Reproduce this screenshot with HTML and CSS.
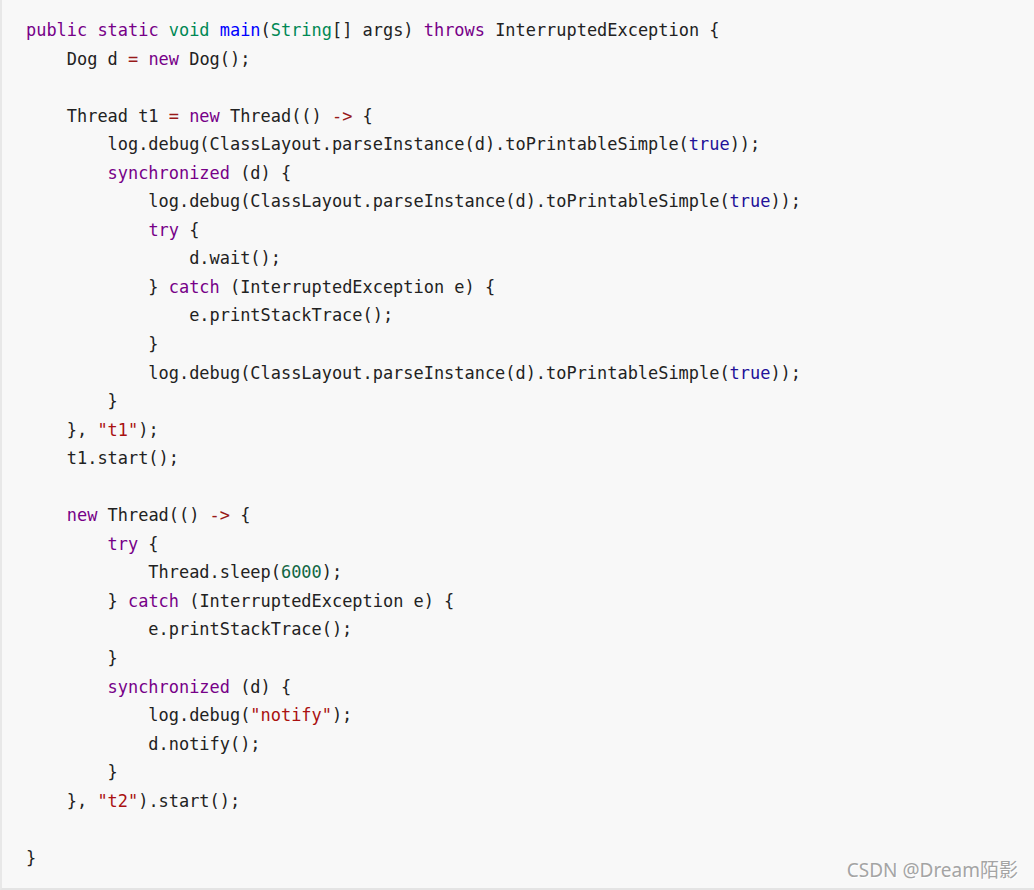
FILE: index.html
```html
<!DOCTYPE html>
<html>
<head>
<meta charset="utf-8">
<link rel="stylesheet" href="styles.css">
</head>
<body>
<div class="code-block">
<pre class="code"><span class="kw">public</span> <span class="kw">static</span> <span class="ty">void</span> <span class="def">main</span>(<span class="ty">String</span>[] args) <span class="kw">throws</span> InterruptedException {
    Dog d <span class="op">=</span> <span class="kw">new</span> Dog();

    Thread t1 <span class="op">=</span> <span class="kw">new</span> Thread(() <span class="op">-&gt;</span> {
        log.debug(ClassLayout.parseInstance(d).toPrintableSimple(<span class="atom">true</span>));
        <span class="kw">synchronized</span> (d) {
            log.debug(ClassLayout.parseInstance(d).toPrintableSimple(<span class="atom">true</span>));
            <span class="kw">try</span> {
                d.wait();
            } <span class="kw">catch</span> (InterruptedException e) {
                e.printStackTrace();
            }
            log.debug(ClassLayout.parseInstance(d).toPrintableSimple(<span class="atom">true</span>));
        }
    }, <span class="str">"t1"</span>);
    t1.start();

    <span class="kw">new</span> Thread(() <span class="op">-&gt;</span> {
        <span class="kw">try</span> {
            Thread.sleep(<span class="num">6000</span>);
        } <span class="kw">catch</span> (InterruptedException e) {
            e.printStackTrace();
        }
        <span class="kw">synchronized</span> (d) {
            log.debug(<span class="str">"notify"</span>);
            d.notify();
        }
    }, <span class="str">"t2"</span>).start();

}</pre>
<div class="watermark">CSDN @Dream陌影</div>
</div>
</body>
</html>
```

FILE: styles.css
```css
html, body {
  margin: 0;
  padding: 0;
  background: #ffffff;
}

.code-block {
  position: relative;
  box-sizing: border-box;
  width: 1034px;
  height: 890px;
  background: #f8f8f8;
  border-left: 2px solid #e8e8e8;
  border-bottom: 2px solid #e4e4e4;
  padding: 16px 0 0 24px;
}

.code {
  margin: 0;
  font-family: "DejaVu Sans Mono", "Liberation Mono", monospace;
  font-size: 16.95px;
  line-height: 28.55px;
  color: #222222;
  white-space: pre;
}

.kw { color: #770088; }
.ty { color: #008855; }
.def { color: #0000ff; }
.op { color: #981a1a; }
.atom { color: #221199; }
.num { color: #116644; }
.str { color: #aa1111; }

.watermark {
  position: absolute;
  right: 16px;
  bottom: 5px;
  font-family: "Noto Sans", "Noto Sans CJK SC", sans-serif;
  font-size: 19px;
  line-height: 26px;
  color: #a4a4a4;
  text-shadow: 1px 1px 0 #ffffff;
}
```
